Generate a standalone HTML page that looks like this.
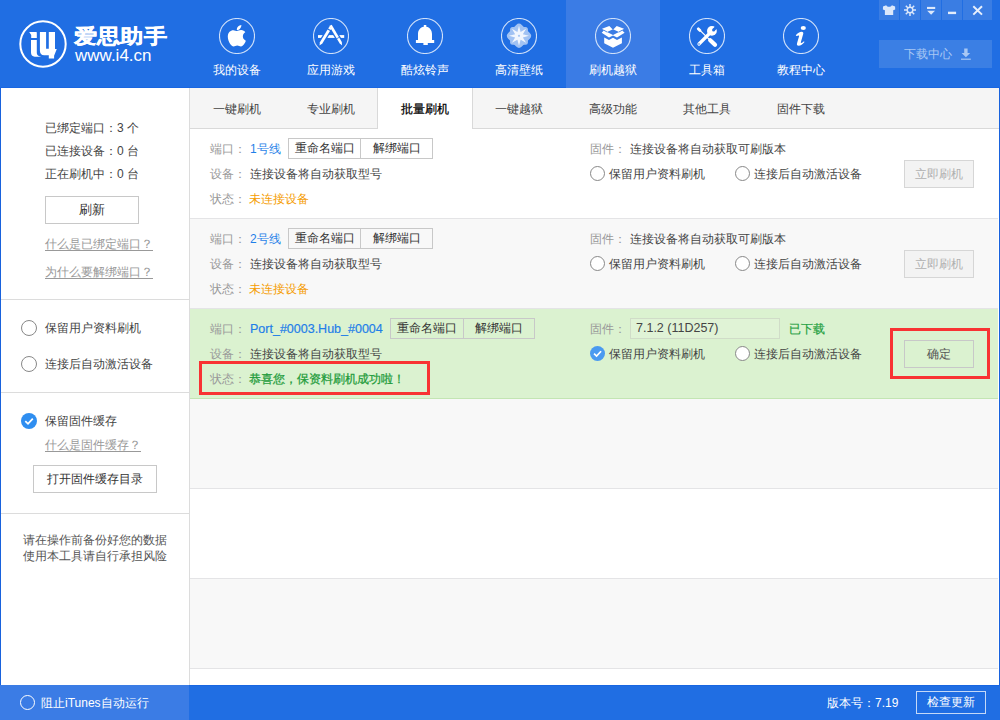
<!DOCTYPE html>
<html><head><meta charset="utf-8">
<style>
*{margin:0;padding:0;box-sizing:border-box}
html,body{width:1000px;height:720px;overflow:hidden;background:#fff}
body{font-family:"Liberation Sans",sans-serif;font-size:12px;color:#333;position:relative}
.a{position:absolute;white-space:nowrap}
#hdr{left:0;top:0;width:1000px;height:88px;background:#206ee3;border-bottom:1px solid #1866e2}
.nav{top:0;width:94px;height:88px}
.nav.on{background:#3b7ce5}
.nav .ic{position:absolute;left:29px;top:18px;width:36px;height:36px;border:1px solid #d8e6fa;border-radius:50%}
.nav .lb{position:absolute;left:0;width:94px;top:61px;text-align:center;color:#fff;font-size:12px;line-height:18px}
.wb{top:0;height:20px;background:#3a7de3}
#dl{left:879px;top:40px;width:113px;height:28px;background:#3b7fe4;color:#a9c8f4;font-size:12px;line-height:28px}
#side{left:0;top:88px;width:190px;height:597px;background:#fff;border-left:1px solid #1862dd;border-right:1px solid #dcdcdc}
#main{left:190px;top:88px;width:809px;height:597px;background:#fff}
#rb{left:999px;top:88px;width:1px;height:597px;background:#1862dd}
#tabs{left:190px;top:88px;width:809px;height:41px;background:#f5f5f5;border-bottom:1px solid #d9d9d9}
.tab{top:0;width:94px;height:40px;line-height:42px;text-align:center;color:#444;font-size:12px}
.tab.on{background:#fff;border-left:1px solid #d9d9d9;border-right:1px solid #d9d9d9;height:41px;color:#000;-webkit-text-stroke:0.25px #000}
.row{left:190px;width:808px;height:90px;border-bottom:1px solid #e4e4e6}
.gray{background:#f8f8f8}
.green{background:#dbf2d0;border-bottom-color:#c3e5b3}
.lbl{color:#999}
.btng{height:21px;border:1px solid #c8c8c8;background:transparent}
.btng span{position:absolute;top:0;height:19px;line-height:19px;text-align:center;color:#333}
.radio{width:15px;height:15px;border:1px solid #888;border-radius:50%;background:#fff}
.disbtn{width:70px;height:28px;border:1px solid #d6d6d6;background:#f3f3f3;color:#b0b0b0;text-align:center;line-height:26px;font-size:12px}
#foot{left:0;top:685px;width:1000px;height:35px;background:#206ee3;border-top:1px solid #1866e2}
#footl{left:0;top:685px;width:189px;height:35px;background:#3b7ce5}
</style></head><body>
<div id="hdr" class="a"></div>
<!-- logo -->
<svg class="a" style="left:19px;top:20px" width="48" height="48" viewBox="0 0 48 48">
<circle cx="24" cy="24" r="22.7" fill="none" stroke="#fff" stroke-width="2"/>
<path fill="#fff" d="M10.2 12L17.6 12L17.8 13L17.8 18L12.2 18L12.2 15Z"/>
<path fill="#fff" d="M12 20L17.8 20L17.8 32.5Q17.8 35.6 20.6 36.2L22.2 36.7L15.8 36.7Q12 36.4 12 32.5Z"/>
<path fill="#fff" d="M20.9 12L27.1 12L27.1 28.7L29.8 28.7L29.8 12L36 12L36 29L37.8 29.1L35.1 35.8L35.1 38.4L29.8 38.4L29.8 35.3L25.2 35.3Q20.9 35 20.9 30.5Z"/>
</svg>
<div class="a" style="left:74px;top:25px;color:#fff;font-size:23px;font-weight:bold;letter-spacing:0px;line-height:26px;transform:scale(1.01,0.87);transform-origin:0 0;-webkit-text-stroke:0.4px #fff">爱思助手</div>
<div class="a" style="left:75px;top:46px;color:#fff;font-size:17px;line-height:20px">www.i4.cn</div>
<!-- nav -->
<div class="a nav" style="left:190px"><svg width="36" height="36" viewBox="0 0 36 36" style="position:absolute;left:29px;top:18px"><circle cx="18" cy="18" r="17.5" fill="none" stroke="#cfe0f9" stroke-width="1.1"/><path transform="translate(8.6 5.4) scale(0.048)" fill="#fff" d="M318.7 268.7c-.2-36.7 16.4-64.4 50-84.8-18.8-26.9-47.2-41.7-84.7-44.6-35.5-2.8-74.3 20.7-88.5 20.7-15 0-49.4-19.7-76.4-19.7C63.3 141.2 4 184.8 4 273.5q0 39.3 14.4 81.2c12.8 36.7 59 126.7 107.2 125.2 25.2-.6 43-17.900 75.8-17.9 31.8 0 48.3 17.9 76.4 17.9 48.6-.7 90.4-82.5 102.6-119.3-65.2-30.7-61.7-90-61.7-91.9zm-56.6-164.2c27.3-32.4 24.8-61.9 24-72.5-24.1 1.4-52 16.4-67.9 34.9-17.5 19.8-27.8 44.3-25.6 71.9 26.1 2 49.9-11.4 69.5-34.3z"/></svg><div class="lb">我的设备</div></div>
<div class="a nav" style="left:284px"><svg width="36" height="36" viewBox="0 0 36 36" style="position:absolute;left:29px;top:18px"><circle cx="18" cy="18" r="17.5" fill="none" stroke="#cfe0f9" stroke-width="1.1"/><rect x="5" y="17.1" width="26.2" height="2.8" fill="#fff"/><g stroke="#206ee3" stroke-width="5.4"><line x1="7.2" y1="26.5" x2="16.2" y2="11.5"/><line x1="18" y1="8" x2="28.4" y2="26"/></g><polygon fill="#fff" points="6.5,27.4 6.9,24.2 14.6,11.6 17.0,13.0 9.3,25.6"/><polygon fill="#fff" points="15.2,10.6 16.3,8.8 18.7,10.2 17.6,12.0"/><polygon fill="#fff" points="16.2,8.1 18.7,6.7 28.8,24.0 29.1,27.4 26.6,25.3"/><line x1="22.6" y1="21.4" x2="26.4" y2="19.2" stroke="#206ee3" stroke-width="0.8"/></svg><div class="lb">应用游戏</div></div>
<div class="a nav" style="left:378px"><svg width="36" height="36" viewBox="0 0 36 36" style="position:absolute;left:29px;top:18px"><circle cx="18" cy="18" r="17.5" fill="none" stroke="#cfe0f9" stroke-width="1.1"/><path fill="#fff" d="M16.8 7h2.5v1.7c3.4 .6 5.7 3.4 5.7 7.3v6h2.2v3h-6.4v1.9h-4.4v-1.9h-7.5v-3h2.1v-6c0-3.9 2.3-6.7 5.8-7.3z"/></svg><div class="lb">酷炫铃声</div></div>
<div class="a nav" style="left:472px"><svg width="36" height="36" viewBox="0 0 36 36" style="position:absolute;left:29px;top:18px"><circle cx="18" cy="18" r="17.5" fill="none" stroke="#cfe0f9" stroke-width="1.1"/><g opacity="0.58" fill="#fff"><rect x="9.1" y="8.9" width="17.8" height="17.8" rx="2.5"/><rect x="8.35" y="8.15" width="19.3" height="19.3" rx="4" transform="rotate(45 18 17.8)"/></g><polygon fill="#fff" fill-opacity="0.85" points="18.00,7.80 16.39,13.92 10.93,10.73 14.12,16.19 8.00,17.80 14.12,19.41 10.93,24.87 16.39,21.68 18.00,27.80 19.61,21.68 25.07,24.87 21.88,19.41 28.00,17.80 21.88,16.19 25.07,10.73 19.61,13.92"/><circle cx="18" cy="17.8" r="1.1" fill="#a8c6f2"/></svg><div class="lb">高清壁纸</div></div>
<div class="a nav on" style="left:566px"><svg width="36" height="36" viewBox="0 0 36 36" style="position:absolute;left:29px;top:18px"><circle cx="18" cy="18" r="17.5" fill="none" stroke="#cfe0f9" stroke-width="1.1"/><polygon fill="#fff" points="6.7,14.7 9,12.3 7,10.7 14.3,7.9 18,11.8 21.7,7.9 29,10.7 27,12.3 29.6,14.7 22,19.6 18,17.4 14,19.6"/><g stroke="#3b7ce5" stroke-width="0.9"><line x1="8.6" y1="12.1" x2="12.2" y2="14.1"/><line x1="27.4" y1="12.1" x2="23.8" y2="14.1"/></g><polygon fill="#3b7ce5" points="18,11.2 24,13.9 18,17 12,13.9"/><polygon fill="#fff" points="9.2,19.6 14,22 18,19.8 22,22 26.9,19.6 26.9,25.3 18,29.8 9.2,25.3"/></svg><div class="lb">刷机越狱</div></div>
<div class="a nav" style="left:660px"><svg width="36" height="36" viewBox="0 0 36 36" style="position:absolute;left:29px;top:18px"><circle cx="18" cy="18" r="17.5" fill="none" stroke="#cfe0f9" stroke-width="1.1"/><g fill="#fff"><rect x="7.6" y="10.2" width="5" height="2.8" rx="1.2" transform="rotate(45 10.1 11.6)"/><line x1="11" y1="12.4" x2="20.5" y2="21.6" stroke="#fff" stroke-width="1.3"/><line x1="21.2" y1="22.2" x2="26" y2="26.8" stroke="#fff" stroke-width="4.2" stroke-linecap="round"/><line x1="21" y1="15" x2="10" y2="26" stroke="#fff" stroke-width="3.2" stroke-linecap="round"/><circle cx="22.9" cy="12.9" r="4.9"/><polygon fill="#206ee3" points="23.5,10.9 25.6,13 30,8.6 27.9,6.5"/><circle cx="24.55" cy="11.95" r="1.5" fill="#206ee3"/><circle cx="10" cy="26" r="0.75" fill="#206ee3"/></g></svg><div class="lb">工具箱</div></div>
<div class="a nav" style="left:754px"><svg width="36" height="36" viewBox="0 0 36 36" style="position:absolute;left:29px;top:18px"><circle cx="18" cy="18" r="17.5" fill="none" stroke="#cfe0f9" stroke-width="1.1"/><ellipse cx="20.3" cy="9.9" rx="2.6" ry="2" fill="#fff"/><path fill="#fff" d="M12.8 17.2C14.6 15.1 16.8 13.8 18.6 13.8C20.1 13.8 20.6 14.7 20.2 16.1L17.9 24C17.7 24.7 17.9 25 18.3 25C18.9 25 19.9 24.3 20.9 23.3L21.5 23.9C19.8 26 17.6 27.8 15.6 27.8C14 27.8 13.6 26.9 14.1 25.1L16 18.6C16.2 17.8 16.1 17.4 15.6 17.4C15.1 17.4 14.3 17.9 13.4 18.1Z"/></svg><div class="lb">教程中心</div></div>
<!-- window buttons -->
<div class="a wb" style="left:879px;width:20px"><svg width="20" height="20" viewBox="0 0 20 20"><path fill="#dce8fb" d="M7.2 5.2L4 6.6 3.9 9.6 5.9 10.3 5.9 15.1 14.2 15.1 14.2 10.3 16.2 9.6 16.1 6.6 12.9 5.2C12.3 6.2 11.2 6.7 10.05 6.7S7.8 6.2 7.2 5.2Z"/></svg></div>
<div class="a wb" style="left:900px;width:20px"><svg width="20" height="20" viewBox="0 0 20 20"><g stroke="#dce8fb" stroke-width="1.5"><line x1="10" y1="4" x2="10" y2="16"/><line x1="4" y1="10" x2="16" y2="10"/><line x1="5.8" y1="5.8" x2="14.2" y2="14.2"/><line x1="14.2" y1="5.8" x2="5.8" y2="14.2"/></g><circle cx="10" cy="10" r="3.5" fill="#dce8fb"/><circle cx="10" cy="10" r="2.1" fill="#3a7de3"/></svg></div>
<div class="a wb" style="left:921px;width:20px"><svg width="20" height="20" viewBox="0 0 20 20"><rect x="6" y="6.9" width="8.2" height="2.1" fill="#dce8fb"/><path d="M6.2 10.8L14 10.8 10.1 14.7Z" fill="#dce8fb"/></svg></div>
<div class="a wb" style="left:942px;width:20px"><svg width="20" height="20" viewBox="0 0 20 20"><rect x="6" y="11.7" width="8.1" height="2.4" fill="#e4edfb"/></svg></div>
<div class="a wb" style="left:963px;width:29px"><svg width="29" height="20" viewBox="0 0 29 20"><g stroke="#e8f0fc" stroke-width="2"><line x1="10.3" y1="6.2" x2="19" y2="14.6"/><line x1="19" y1="6.2" x2="10.3" y2="14.6"/></g></svg></div>
<div id="dl" class="a"><span style="position:absolute;left:25px;top:0">下载中心</span><svg style="position:absolute;left:80px;top:7px" width="14" height="14" viewBox="0 0 14 14"><path fill="#a9c8f4" d="M5.2 1.5h3.4v4.5h2.6L6.9 10.2 2.6 6h2.6z"/><rect x="2" y="11.6" width="9.8" height="1.2" fill="#a9c8f4"/></svg></div>

<div id="side" class="a"></div>
<div id="main" class="a"></div>
<div id="rb" class="a"></div>

<!-- sidebar content -->
<div class="a" style="left:45px;top:119px;line-height:18px;color:#444">已绑定端口：3 个</div>
<div class="a" style="left:45px;top:142px;line-height:18px;color:#444">已连接设备：0 台</div>
<div class="a" style="left:45px;top:165px;line-height:18px;color:#444">正在刷机中：0 台</div>
<div class="a" style="left:45px;top:196px;width:94px;height:28px;border:1px solid #c8c8c8;text-align:center;line-height:26px;color:#333;font-size:13px">刷新</div>
<div class="a" style="left:45px;top:235px;line-height:18px;color:#999;text-decoration:underline;text-underline-offset:2px">什么是已绑定端口？</div>
<div class="a" style="left:45px;top:263px;line-height:18px;color:#999;text-decoration:underline;text-underline-offset:2px">为什么要解绑端口？</div>
<div class="a" style="left:1px;top:299px;width:188px;height:1px;background:#dcdcdc"></div>
<div class="a radio" style="left:21px;top:320px;width:16px;height:16px"></div>
<div class="a" style="left:45px;top:319px;line-height:18px;color:#444">保留用户资料刷机</div>
<div class="a radio" style="left:21px;top:356px;width:16px;height:16px"></div>
<div class="a" style="left:45px;top:355px;line-height:18px;color:#444">连接后自动激活设备</div>
<div class="a" style="left:1px;top:392px;width:188px;height:1px;background:#dcdcdc"></div>
<div class="a" style="left:21px;top:413px;width:16px;height:16px;border-radius:50%;background:#2f8ef0"><svg width="16" height="16" viewBox="0 0 16 16" style="position:absolute;left:0;top:0"><path d="M4.3 8.2L7 10.8 11.8 5.6" fill="none" stroke="#fff" stroke-width="1.8"/></svg></div>
<div class="a" style="left:45px;top:412px;line-height:18px;color:#444">保留固件缓存</div>
<div class="a" style="left:45px;top:436px;line-height:18px;color:#999;text-decoration:underline;text-underline-offset:2px">什么是固件缓存？</div>
<div class="a" style="left:33px;top:465px;width:124px;height:28px;border:1px solid #c8c8c8;text-align:center;line-height:26px;color:#333;font-size:12px">打开固件缓存目录</div>
<div class="a" style="left:1px;top:513px;width:188px;height:1px;background:#dcdcdc"></div>
<div class="a" style="left:23px;top:532px;line-height:16px;color:#555">请在操作前备份好您的数据<br>使用本工具请自行承担风险</div>

<!-- tabs -->
<div id="tabs" class="a">
<div class="a tab" style="left:0">一键刷机</div>
<div class="a tab" style="left:94px">专业刷机</div>
<div class="a tab on" style="left:187px;width:96px">批量刷机</div>
<div class="a tab" style="left:282px">一键越狱</div>
<div class="a tab" style="left:376px">高级功能</div>
<div class="a tab" style="left:470px">其他工具</div>
<div class="a tab" style="left:564px">固件下载</div>
</div>

<!-- rows -->
<div class="a row" style="top:129px"></div>
<div class="a row gray" style="top:219px"></div>
<div class="a row green" style="top:309px"></div>
<div class="a row gray" style="top:399px"></div>
<div class="a row" style="top:489px"></div>
<div class="a row gray" style="top:579px"></div>

<div class="a lbl" style="left:210px;top:140px;line-height:18px">端口：</div>
<div class="a" style="left:250px;top:140px;line-height:18px;color:#1f7fe8">1号线</div>
<div class="a btng" style="left:288px;top:138px;width:145px"><span style="left:0;width:72px;border-right:1px solid #c8c8c8">重命名端口</span><span style="left:72px;width:71px">解绑端口</span></div>
<div class="a lbl" style="left:210px;top:165px;line-height:18px">设备：</div>
<div class="a" style="left:250px;top:165px;line-height:18px;color:#444">连接设备将自动获取型号</div>
<div class="a lbl" style="left:210px;top:190px;line-height:18px">状态：</div>
<div class="a" style="left:249px;top:190px;line-height:18px;color:#f59c00">未连接设备</div>
<div class="a lbl" style="left:590px;top:140px;line-height:18px">固件：</div>
<div class="a" style="left:630px;top:140px;line-height:18px;color:#444">连接设备将自动获取可刷版本</div>
<div class="a radio" style="left:590px;top:166px"></div>
<div class="a" style="left:609px;top:165px;line-height:18px;color:#444">保留用户资料刷机</div>
<div class="a radio" style="left:735px;top:166px"></div>
<div class="a" style="left:754px;top:165px;line-height:18px;color:#444">连接后自动激活设备</div>
<div class="a disbtn" style="left:904px;top:160px">立即刷机</div>
<div class="a lbl" style="left:210px;top:230px;line-height:18px">端口：</div>
<div class="a" style="left:250px;top:230px;line-height:18px;color:#1f7fe8">2号线</div>
<div class="a btng" style="left:288px;top:228px;width:145px"><span style="left:0;width:72px;border-right:1px solid #c8c8c8">重命名端口</span><span style="left:72px;width:71px">解绑端口</span></div>
<div class="a lbl" style="left:210px;top:255px;line-height:18px">设备：</div>
<div class="a" style="left:250px;top:255px;line-height:18px;color:#444">连接设备将自动获取型号</div>
<div class="a lbl" style="left:210px;top:280px;line-height:18px">状态：</div>
<div class="a" style="left:249px;top:280px;line-height:18px;color:#f59c00">未连接设备</div>
<div class="a lbl" style="left:590px;top:230px;line-height:18px">固件：</div>
<div class="a" style="left:630px;top:230px;line-height:18px;color:#444">连接设备将自动获取可刷版本</div>
<div class="a radio" style="left:590px;top:256px"></div>
<div class="a" style="left:609px;top:255px;line-height:18px;color:#444">保留用户资料刷机</div>
<div class="a radio" style="left:735px;top:256px"></div>
<div class="a" style="left:754px;top:255px;line-height:18px;color:#444">连接后自动激活设备</div>
<div class="a disbtn" style="left:904px;top:250px">立即刷机</div>
<div class="a lbl" style="left:210px;top:320px;line-height:18px">端口：</div>
<div class="a" style="left:250px;top:320px;line-height:18px;color:#1f7fe8;font-size:12.5px;-webkit-text-stroke:0.2px #1f7fe8">Port_#0003.Hub_#0004</div>
<div class="a btng" style="left:390px;top:318px;width:145px"><span style="left:0;width:73px;border-right:1px solid #c8c8c8">重命名端口</span><span style="left:73px;width:70px">解绑端口</span></div>
<div class="a lbl" style="left:210px;top:345px;line-height:18px">设备：</div>
<div class="a" style="left:250px;top:345px;line-height:18px;color:#444">连接设备将自动获取型号</div>
<div class="a lbl" style="left:210px;top:370px;line-height:18px">状态：</div>
<div class="a" style="left:249px;top:370px;line-height:18px;color:#1f9c3c;-webkit-text-stroke:0.25px #1f9c3c">恭喜您，保资料刷机成功啦！</div>
<div class="a" style="left:199px;top:361px;width:231px;height:34px;border:3px solid #f83333"></div>
<div class="a lbl" style="left:590px;top:320px;line-height:18px">固件：</div>
<div class="a" style="left:630px;top:318px;width:150px;height:21px;border:1px solid #d0dcc8;background:#e0f3d6;color:#444;line-height:19px;padding-left:5px;font-size:12.5px">7.1.2 (11D257)</div>
<div class="a" style="left:789px;top:320px;line-height:18px;color:#23a040;font-size:12px;-webkit-text-stroke:0.2px #23a040">已下载</div>
<div class="a" style="left:590px;top:346px;width:15px;height:15px;border-radius:50%;background:#4a9af0"><svg width="15" height="15" viewBox="0 0 16 16" style="position:absolute;left:0;top:0"><path d="M4.3 8.2L7 10.8 11.8 5.6" fill="none" stroke="#fff" stroke-width="1.8"/></svg></div>
<div class="a" style="left:609px;top:345px;line-height:18px;color:#444">保留用户资料刷机</div>
<div class="a radio" style="left:735px;top:346px"></div>
<div class="a" style="left:754px;top:345px;line-height:18px;color:#444">连接后自动激活设备</div>
<div class="a" style="left:890px;top:328px;width:100px;height:51px;border:3px solid #f83333"></div>
<div class="a" style="left:904px;top:340px;width:70px;height:28px;border:1px solid #c8c8c8;background:transparent;color:#555;text-align:center;line-height:27px;font-size:12px">确定</div>

<!-- footer -->
<div id="foot" class="a"></div>
<div id="footl" class="a"></div>
<div class="a" style="left:20px;top:695px;width:15px;height:15px;border:1.5px solid #fff;border-radius:50%"></div>
<div class="a" style="left:41px;top:694px;line-height:18px;color:#fff;font-size:12px">阻止iTunes自动运行</div>
<div class="a" style="left:827px;top:694px;line-height:18px;color:#fff;font-size:12px">版本号：7.19</div>
<div class="a" style="left:916px;top:691px;width:70px;height:23px;border:1px solid #c5d9f7;text-align:center;line-height:21px;color:#fff;font-size:12px">检查更新</div>
</body></html>
